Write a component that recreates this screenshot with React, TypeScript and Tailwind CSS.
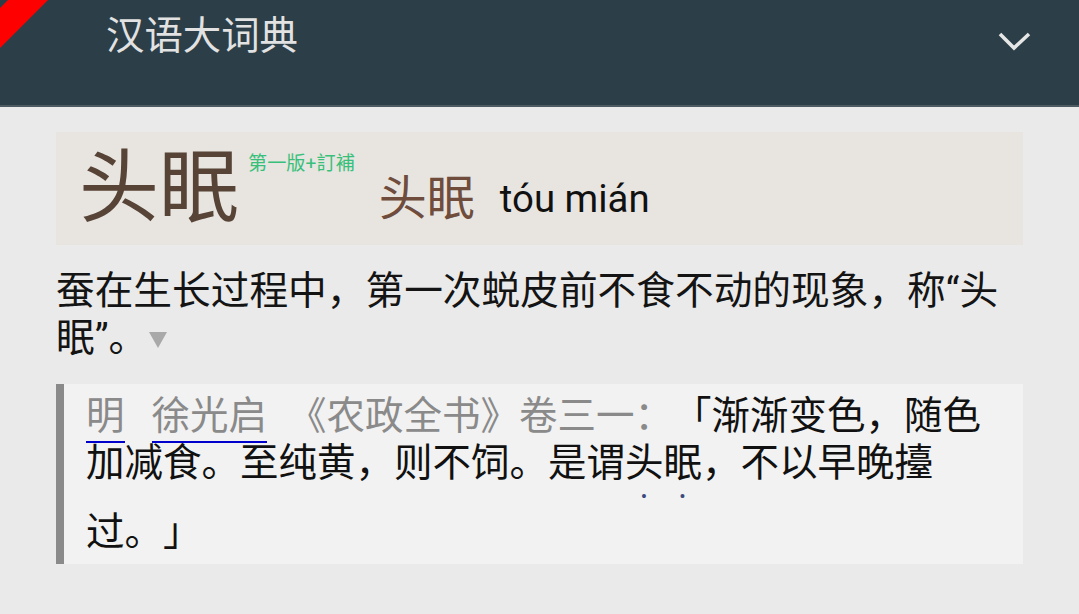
import React from "react";

const FONT = 'Roboto, "Noto Sans CJK SC", sans-serif';

export default function App() {
  return (
    <div
      className="w-[1079px] h-[614px] bg-[#eaeaea] overflow-hidden relative [text-spacing-trim:space-all]"
      style={{ fontFamily: FONT }}
    >
      {/* header */}
      <header className="h-[107px] bg-[#2c3e48] border-b-2 border-[#4e5b63] flex items-start justify-between">
        <h1 className="pl-[106px] pt-[17px] text-[38.4px] leading-none text-[#e2e2e2] font-normal">
          汉语大词典
        </h1>
        <svg
          width="36"
          height="22"
          viewBox="0 0 36 22"
          className="mt-[30px] mr-[46px]"
        >
          <polyline
            points="3,4 17,18 32,4"
            fill="none"
            stroke="#e6e6e6"
            strokeWidth="3.6"
          />
        </svg>
      </header>

      {/* red corner ribbon */}
      <svg
        width="52"
        height="52"
        viewBox="0 0 52 52"
        className="absolute left-0 top-0"
      >
        <polygon points="0,8 8,0 48,0 0,48" fill="#ff0000" />
      </svg>

      <main className="px-[56px] pt-[25px]">
        {/* heading box */}
        <section className="h-[113px] bg-[#e8e5e1] flex items-start pl-[23px]">
          <span className="mt-[16px] text-[80px] leading-none text-[#574436]">
            头眠
          </span>
          <span className="mt-[22px] ml-[9px] text-[19.2px] leading-none text-[#38c07a]">
            第一版+訂補
          </span>
          <span className="mt-[43px] ml-[24px] text-[48px] leading-none text-[#6f4c3c]">
            头眠
          </span>
          <span className="mt-[48px] ml-[25px] text-[38.4px] leading-none text-[#111]">
            tóu mián
          </span>
        </section>

        {/* definition */}
        <p className="mt-[22px] text-[38.7px] leading-[47px] text-[#141414]">
          蚕在生长过程中，第一次蜕皮前不食不动的现象，称“头眠”。
          <svg
            width="20"
            height="18"
            viewBox="0 0 20 18"
            className="inline-block align-middle ml-[1px] mb-[2px]"
          >
            <polygon points="1,1 19,1 10,17" fill="#a9a9a9" />
          </svg>
        </p>

        {/* citation */}
        <blockquote className="mt-[23px] bg-[#f2f2f2] border-l-[8px] border-[#8a8a8a] pl-[22px] pr-[18px] pt-[8px] pb-[9px] text-[38.5px] leading-[47px] text-[#111]">
          <span className="text-[#8a8a8a]">
            <span className="border-b-2 border-[#0000cc] pb-[3px]">明</span>
            <span className="inline-block w-[27px]"></span>
            <span className="border-b-2 border-[#0000cc] pb-[3px]">徐光启</span>
            <span className="inline-block w-[21px]"></span>
            《农政全书》卷三一：
          </span>
          「渐渐变色，随色加减食。至纯黄，则不饲。是谓
          <span className="[text-emphasis:dot_#3b4a7c] [-webkit-text-emphasis:dot_#3b4a7c] [text-emphasis-position:under_right] [-webkit-text-emphasis-position:under_right]">
            头眠
          </span>
          ，不以早晚擡过。」
        </blockquote>
      </main>
    </div>
  );
}
